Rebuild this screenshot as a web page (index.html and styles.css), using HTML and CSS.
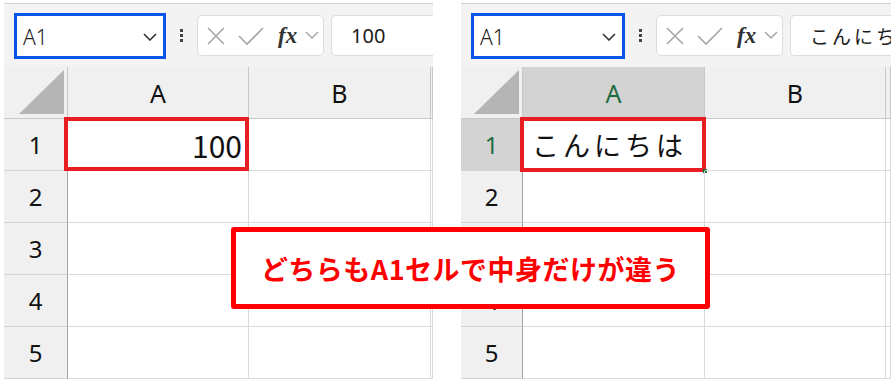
FILE: index.html
```html
<!DOCTYPE html>
<html lang="ja">
<head>
  <meta charset="UTF-8">
  <title>A1セルの比較</title>
  <link rel="stylesheet" href="styles.css">
</head>
<body>

<div class="compare">

  <!-- left: number -->
  <div class="sheet sheet-left">
    <div class="toolbar">
      <div class="namebox">
        <span>A1</span>
        <svg class="chev" width="14" height="8" viewBox="0 0 14 8"><path d="M1 1 L7 7 L13 1" fill="none" stroke="#333" stroke-width="1.6"/></svg>
      </div>
      <div class="dots"><i></i><i></i><i></i></div>
      <div class="fbtns">
        <svg width="20" height="20" viewBox="0 0 20 20"><path d="M2 2 L18 18 M18 2 L2 18" stroke="#a6a6a6" stroke-width="1.6"/></svg>
        <svg width="26" height="20" viewBox="0 0 26 20"><path d="M1 10 L9 18 L25 2" fill="none" stroke="#a6a6a6" stroke-width="1.6"/></svg>
        <span class="fx">fx</span>
        <svg width="14" height="9" viewBox="0 0 14 9"><path d="M1 1 L7 7 L13 1" fill="none" stroke="#a6a6a6" stroke-width="1.5"/></svg>
      </div>
      <div class="finput">100</div>
    </div>
    <div class="grid">
      <div class="corner"><svg width="45" height="44" viewBox="0 0 45 44"><path d="M0 44 L45 44 L45 0 Z" fill="#b5b5b5"/></svg></div>
      <div class="colhead">A</div>
      <div class="colhead">B</div>
      <div class="colhead"></div>

      <div class="rowhead">1</div>
      <div class="cell num">100<span class="sel"></span></div>
      <div class="cell"></div>
      <div class="cell"></div>

      <div class="rowhead">2</div>
      <div class="cell"></div>
      <div class="cell"></div>
      <div class="cell"></div>

      <div class="rowhead">3</div>
      <div class="cell"></div>
      <div class="cell"></div>
      <div class="cell"></div>

      <div class="rowhead">4</div>
      <div class="cell"></div>
      <div class="cell"></div>
      <div class="cell"></div>

      <div class="rowhead">5</div>
      <div class="cell"></div>
      <div class="cell"></div>
      <div class="cell"></div>
    </div>
  </div>

  <!-- right: text -->
  <div class="sheet sheet-right">
    <div class="toolbar">
      <div class="namebox">
        <span>A1</span>
        <svg class="chev" width="14" height="8" viewBox="0 0 14 8"><path d="M1 1 L7 7 L13 1" fill="none" stroke="#333" stroke-width="1.6"/></svg>
      </div>
      <div class="dots"><i></i><i></i><i></i></div>
      <div class="fbtns">
        <svg width="20" height="20" viewBox="0 0 20 20"><path d="M2 2 L18 18 M18 2 L2 18" stroke="#a6a6a6" stroke-width="1.6"/></svg>
        <svg width="26" height="20" viewBox="0 0 26 20"><path d="M1 10 L9 18 L25 2" fill="none" stroke="#a6a6a6" stroke-width="1.6"/></svg>
        <span class="fx">fx</span>
        <svg width="14" height="9" viewBox="0 0 14 9"><path d="M1 1 L7 7 L13 1" fill="none" stroke="#a6a6a6" stroke-width="1.5"/></svg>
      </div>
      <div class="finput jp">こんにちは</div>
    </div>
    <div class="grid">
      <div class="corner"><svg width="45" height="44" viewBox="0 0 45 44"><path d="M0 44 L45 44 L45 0 Z" fill="#b5b5b5"/></svg></div>
      <div class="colhead active">A</div>
      <div class="colhead">B</div>
      <div class="colhead"></div>

      <div class="rowhead active">1</div>
      <div class="cell txt">こんにちは<span class="sel"></span></div>
      <div class="cell"></div>
      <div class="cell"></div>

      <div class="rowhead">2</div>
      <div class="cell"></div>
      <div class="cell"></div>
      <div class="cell"></div>

      <div class="rowhead">3</div>
      <div class="cell"></div>
      <div class="cell"></div>
      <div class="cell"></div>

      <div class="rowhead">4</div>
      <div class="cell"></div>
      <div class="cell"></div>
      <div class="cell"></div>

      <div class="rowhead">5</div>
      <div class="cell"></div>
      <div class="cell"></div>
      <div class="cell"></div>
    </div>
  </div>

  <div class="note">どちらもA1セルで中身だけが違う</div>
</div>

</body>
</html>
```

FILE: styles.css
```css
body {
  margin: 0;
  background: #fff;
  font-family: "Noto Sans", "Noto Sans CJK JP", sans-serif;
  color: #1a1a1a;
}
.compare {
  position: relative;
  display: flex;
  gap: 28px;
  padding: 3px 0 0 4px;
  height: 378px;
  overflow: hidden;
}
.sheet {
  overflow: hidden;
  flex: none;
}
.sheet-left {
  width: 429px;
}
.sheet-right {
  width: 430px;
}

/* formula bar */
.toolbar {
  display: flex;
  align-items: center;
  height: 63px;
  border-top: 1px solid #d4d4d4;
  background: #f3f3f3;
  padding-left: 10px;
}
.namebox {
  box-sizing: border-box;
  flex: none;
  width: 152px;
  height: 46px;
  border: 3px solid #0a55e6;
  background: #fff;
  display: flex;
  align-items: center;
  justify-content: space-between;
  padding: 2px 6px 0 6px;
  font-size: 21px;
  font-weight: 300;
  color: #222;
}
.sheet-right .namebox {
  width: 154px;
}
.dots {
  flex: none;
  display: flex;
  flex-direction: column;
  gap: 2px;
  margin: 0 14px 0 14px;
}
.dots i {
  display: block;
  width: 3px;
  height: 3px;
  background: #444;
}
.fbtns {
  box-sizing: border-box;
  flex: none;
  width: 127px;
  height: 41px;
  background: #fff;
  border: 1px solid #dcdcdc;
  border-radius: 5px;
  display: flex;
  align-items: center;
  padding-left: 8px;
  gap: 12px;
}
.fbtns .fx {
  font-family: "Liberation Serif", serif;
  font-style: italic;
  font-weight: bold;
  font-size: 23px;
  color: #333;
  margin-left: 2px;
  margin-right: -4px;
}
.finput {
  box-sizing: border-box;
  flex: 1;
  min-width: 0;
  height: 41px;
  margin-left: 7px;
  background: #fff;
  border: 1px solid #dcdcdc;
  border-right: none;
  border-radius: 5px 0 0 5px;
  display: flex;
  align-items: center;
  padding-left: 19px;
  font-size: 20px;
  white-space: nowrap;
  overflow: hidden;
}
.finput.jp {
  font-family: "Noto Sans CJK JP", sans-serif;
  font-size: 19px;
  letter-spacing: 3px;
}

/* grid */
.grid {
  display: grid;
  grid-template-rows: repeat(6, 52px);
}
.sheet-left .grid {
  grid-template-columns: 64px 181px 182px 1fr;
}
.sheet-right .grid {
  grid-template-columns: 62px 182px 181px 1fr;
}
.grid > div {
  box-sizing: border-box;
}
.corner {
  background: #f0f0f0;
  border-right: 1px solid #c8c8c8;
  border-bottom: 1px solid #c8c8c8;
  display: flex;
  align-items: flex-end;
  justify-content: flex-end;
  padding: 0 3px 4px 0;
}
.colhead {
  background: #f0f0f0;
  border-right: 1px solid #c8c8c8;
  border-bottom: 1px solid #c8c8c8;
  display: flex;
  align-items: center;
  justify-content: center;
  font-size: 25px;
  color: #111;
}
.rowhead {
  background: #f0f0f0;
  border-right: 1px solid #a3a3a3;
  border-bottom: 1px solid #d4d4d4;
  display: flex;
  align-items: center;
  justify-content: center;
  font-size: 24px;
  color: #111;
}
.colhead.active,
.rowhead.active {
  background: #d3d3d3;
  color: #1d6b40;
}
.cell {
  position: relative;
  border-right: 1px solid #dadada;
  border-bottom: 1px solid #dadada;
  display: flex;
  align-items: center;
}
.cell.num {
  justify-content: flex-end;
  padding-right: 6px;
  font-family: "Noto Sans CJK JP", sans-serif;
  font-size: 30px;
  color: #111;
}
.cell.txt {
  padding-left: 9px;
  font-family: "Noto Sans CJK JP", sans-serif;
  font-size: 27px;
  letter-spacing: 4px;
  color: #111;
}
.sel {
  position: absolute;
  top: -2px;
  left: -4px;
  right: -1px;
  bottom: -1px;
  border: 4px solid #e81c23;
}
.sheet-right .sel {
  left: -3px;
  right: -2px;
  bottom: -2px;
}
.sheet-right .sel::after {
  content: "";
  position: absolute;
  right: -5px;
  bottom: -5px;
  width: 4px;
  height: 4px;
  background: #1d6b40;
}

/* annotation */
.note {
  position: absolute;
  left: 231px;
  top: 227px;
  width: 479px;
  height: 82px;
  box-sizing: border-box;
  border: 5px solid #ff0000;
  border-radius: 3px;
  background: #fff;
  display: flex;
  align-items: center;
  justify-content: center;
  font-family: "Noto Sans CJK JP", sans-serif;
  font-weight: bold;
  font-size: 27px;
  color: #ff0000;
  letter-spacing: 0.5px;
}
```
